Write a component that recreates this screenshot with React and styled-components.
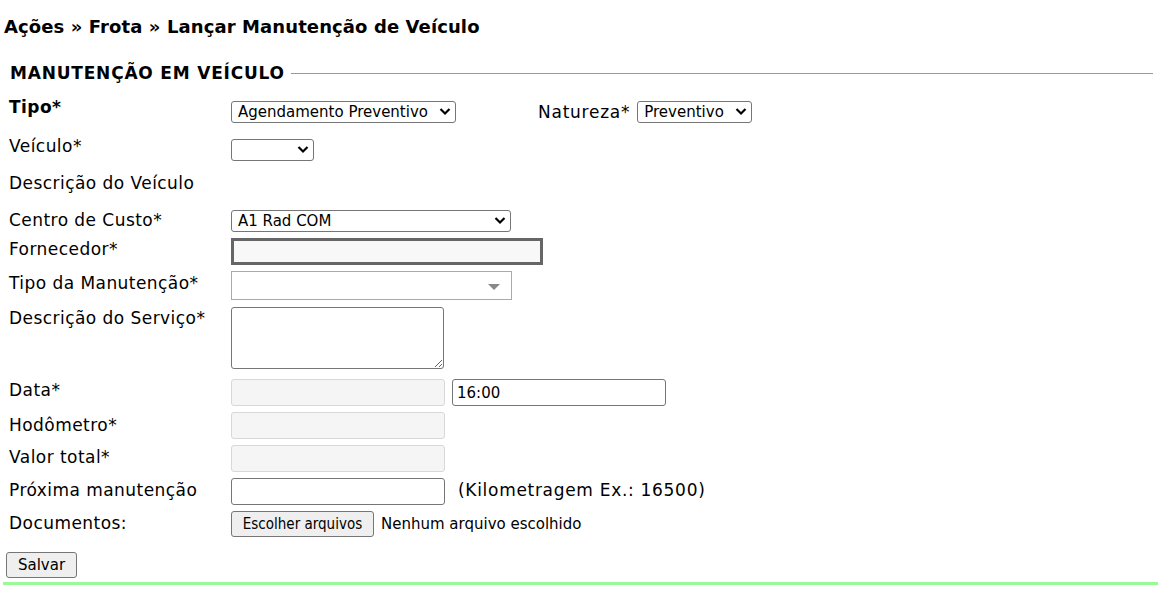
import React from 'react'
import styled, { createGlobalStyle } from 'styled-components'

const GlobalStyle = createGlobalStyle`
  body {
    margin: 0;
    background: #fff;
    font-family: "DejaVu Sans", Verdana, sans-serif;
    color: #000;
  }
`

const Page = styled.div`
  width: 1155px;
  padding-left: 3px;
`

const Title = styled.h1`
  margin: 0;
  padding: 17px 0 0 1px;
  height: 31px;
  font-size: 18px;
  letter-spacing: 0.1px;
  font-weight: bold;
  line-height: 20px;
`

const Fieldset = styled.div`
  margin-right: 5px;
`

const LegendRow = styled.div`
  display: flex;
  align-items: center;
  height: 22px;
  margin-top: 14px;
`

const Legend = styled.span`
  padding: 0 6px 0 7px;
  font-size: 17px;
  letter-spacing: 0.8px;
  font-weight: bold;
  line-height: 20px;
`

const LegendLine = styled.div`
  flex: 1;
  border-top: 1px solid #999;
`

const Form = styled.div`
  padding-top: 13px;
`

const Row = styled.div`
  display: flex;
  align-items: flex-start;
  height: ${(p) => p.$h}px;
  padding-left: 6px;
`

const Label = styled.div`
  width: 222px;
  flex-shrink: 0;
  padding-top: ${(p) => p.$pt || 0}px;
  font-size: 17px;
  letter-spacing: 0.45px;
  line-height: 20px;
  font-weight: ${(p) => (p.$bold ? 'bold' : 'normal')};
  white-space: nowrap;
`

const InlineLabel = styled(Label)`
  width: auto;
  margin-left: 82px;
  margin-right: 7px;
  letter-spacing: 0.75px;
`

const SelectWrap = styled.span`
  position: relative;
  display: inline-block;
  margin-top: ${(p) => p.$mt || 0}px;
`

const Select = styled.select`
  display: block;
  appearance: none;
  margin: 0;
  width: ${(p) => p.$w}px;
  height: 22px;
  padding: 0 24px 0 6px;
  border: 1px solid #767676;
  border-radius: 3px;
  background: #fff;
  font-family: "DejaVu Sans", Verdana, sans-serif;
  font-size: 15px;
  color: #000;
`

const Chevron = styled.svg`
  position: absolute;
  right: 5px;
  top: 6px;
  pointer-events: none;
`

const FocusBox = styled.div`
  width: 312px;
  height: 27px;
  box-sizing: border-box;
  border: 3px solid #666;
  background: #f8f8f8;
`

const Combo = styled.div`
  width: 281px;
  height: 29px;
  box-sizing: border-box;
  border: 1px solid #aaa;
  background: #fff;
  display: flex;
  align-items: center;
  justify-content: flex-end;
  padding-right: 11px;
`

const Caret = styled.span`
  width: 0;
  height: 0;
  margin-top: 3px;
  border-left: 6px solid transparent;
  border-right: 6px solid transparent;
  border-top: 6px solid #888;
`

const TextArea = styled.textarea`
  width: 213px;
  height: 62px;
  box-sizing: border-box;
  margin: 0;
  border: 1px solid #767676;
  border-radius: 3px;
  resize: both;
`

const Input = styled.input`
  width: 214px;
  height: 27px;
  box-sizing: border-box;
  margin: 0;
  margin-left: ${(p) => p.$ml || 0}px;
  padding: 0 4px;
  border: 1px solid ${(p) => (p.disabled ? '#d8d8d8' : '#767676')};
  border-radius: 3px;
  background: ${(p) => (p.disabled ? '#f5f5f5' : '#fff')};
  font-family: "DejaVu Sans", Verdana, sans-serif;
  font-size: 15px;
  color: #000;
`

const Hint = styled.span`
  margin-left: 13px;
  padding-top: 2px;
  font-size: 17px;
  letter-spacing: 0.7px;
  line-height: 20px;
`

const Button = styled.button`
  width: ${(p) => p.$w}px;
  height: 26px;
  margin: 0;
  padding: 0;
  border: 1px solid #767676;
  border-radius: 3px;
  background: #efefef;
  font-family: ${(p) => (p.$narrow ? '"DejaVu Sans Condensed", "DejaVu Sans", sans-serif' : '"DejaVu Sans", Verdana, sans-serif')};
  font-size: 15px;
  color: #000;
`

const FileName = styled.span`
  margin-left: 7px;
  padding-top: 4px;
  font-size: 15px;
  line-height: 18px;
`

const SaveRow = styled.div`
  height: 30px;
  padding-left: 3px;
`

const GreenLine = styled.div`
  height: 3px;
  background: #98fb98;
`

const Dropdown = ({ w, mt, children }) => (
  <SelectWrap $mt={mt}>
    <Select $w={w}>{children}</Select>
    <Chevron width="12" height="9" viewBox="0 0 12 9">
      <path d="M1.5 2 L6 6.5 L10.5 2" fill="none" stroke="#000" strokeWidth="2.2" />
    </Chevron>
  </SelectWrap>
)

export default function App() {
  return (
    <>
      <GlobalStyle />
      <Page>
        <Title>Ações » Frota » Lançar Manutenção de Veículo</Title>
        <Fieldset>
          <LegendRow>
            <Legend>MANUTENÇÃO EM VEÍCULO</Legend>
            <LegendLine />
          </LegendRow>
          <Form>
            <Row $h={39}>
              <Label $bold>Tipo*</Label>
              <Dropdown w={225} mt={4}>
                <option>Agendamento Preventivo</option>
              </Dropdown>
              <InlineLabel $pt={5}>Natureza*</InlineLabel>
              <Dropdown w={115} mt={4}>
                <option>Preventivo</option>
              </Dropdown>
            </Row>
            <Row $h={37}>
              <Label>Veículo*</Label>
              <Dropdown w={83} mt={3}>
                <option></option>
              </Dropdown>
            </Row>
            <Row $h={37}>
              <Label>Descrição do Veículo</Label>
            </Row>
            <Row $h={28}>
              <Label>Centro de Custo*</Label>
              <Dropdown w={280}>
                <option>A1 Rad COM</option>
              </Dropdown>
            </Row>
            <Row $h={33}>
              <Label $pt={1}>Fornecedor*</Label>
              <FocusBox />
            </Row>
            <Row $h={36}>
              <Label $pt={2}>Tipo da Manutenção*</Label>
              <Combo>
                <Caret />
              </Combo>
            </Row>
            <Row $h={72}>
              <Label $pt={1}>Descrição do Serviço*</Label>
              <TextArea />
            </Row>
            <Row $h={33}>
              <Label $pt={1}>Data*</Label>
              <Input disabled />
              <Input $ml={7} defaultValue="16:00" />
            </Row>
            <Row $h={33}>
              <Label $pt={3}>Hodômetro*</Label>
              <Input disabled />
            </Row>
            <Row $h={33}>
              <Label $pt={2}>Valor total*</Label>
              <Input disabled />
            </Row>
            <Row $h={33}>
              <Label $pt={2}>Próxima manutenção</Label>
              <Input />
              <Hint>(Kilometragem Ex.: 16500)</Hint>
            </Row>
            <Row $h={41}>
              <Label $pt={2}>Documentos:</Label>
              <Button $w={143} $narrow>Escolher arquivos</Button>
              <FileName>Nenhum arquivo escolhido</FileName>
            </Row>
          </Form>
        </Fieldset>
        <SaveRow>
          <Button $w={71}>Salvar</Button>
        </SaveRow>
        <GreenLine />
      </Page>
    </>
  )
}
